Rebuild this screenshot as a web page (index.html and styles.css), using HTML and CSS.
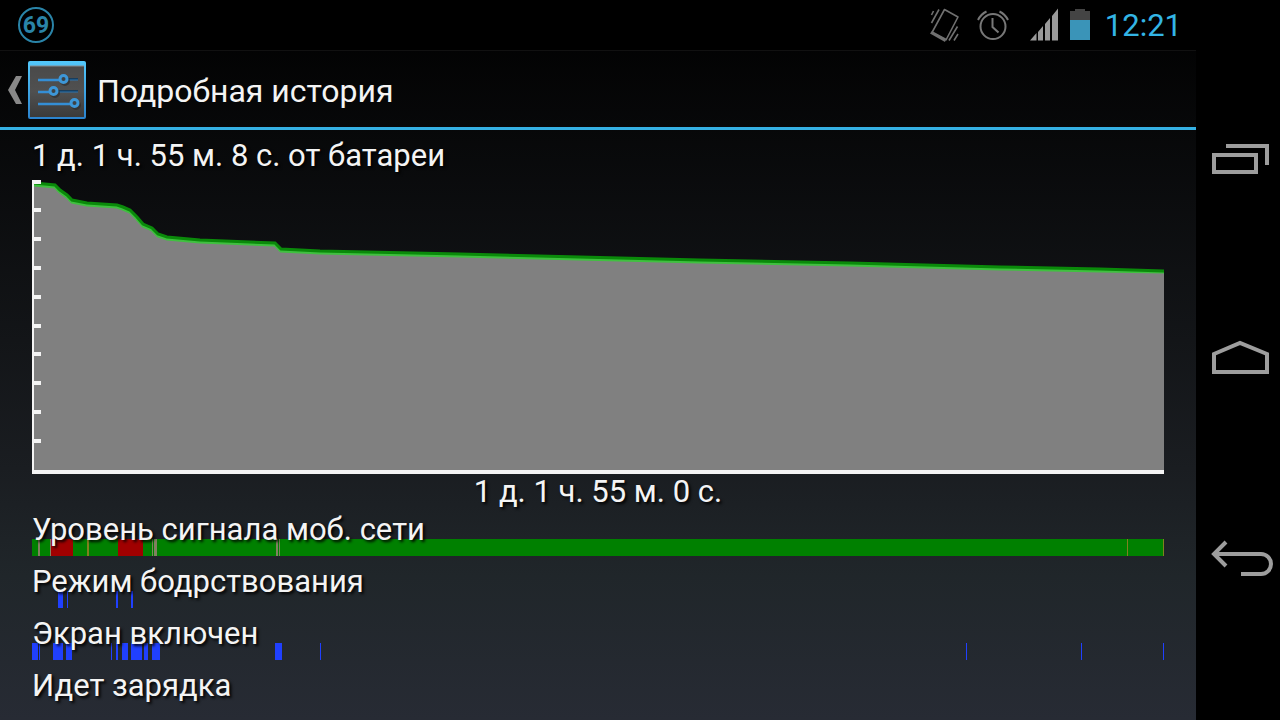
FILE: index.html
```html
<!DOCTYPE html>
<html lang="ru">
<head>
<meta charset="utf-8">
<meta name="viewport" content="width=device-width, initial-scale=1">
<title>Подробная история</title>
<link rel="stylesheet" href="styles.css">
</head>
<body>
<div class="device">
  <div class="screen">
    <div class="status">
      <span class="badge">69</span>
      <div class="status-icons">
        <svg class="icon-vibrate" width="30" height="34" viewBox="0 0 30 34" fill="none" stroke="#707070" stroke-width="1.6">
          <path d="M14.500 1.500 28 9 16 32 2 24.500Z" stroke-linejoin="round"/>
          <path d="M2 23 16 30.500 15 34 0 25.500Z" fill="#707070" stroke="none"/>
          <path d="M1.500 7 3.500 3M1.500 15 9 1.500M19 32.500 27.500 18.500M24 32.500 28 26"/>
        </svg>
        <svg class="icon-alarm" width="32" height="34" viewBox="0 0 32 34" fill="none" stroke="#777" stroke-width="2">
          <circle cx="16" cy="18.500" r="12.500"/>
          <path d="M15.500 10v9l6 5.500M1 12Q4 6 9.500 3.500M31 12Q28 6 22.500 3.500"/>
        </svg>
        <svg class="icon-signal" width="28" height="34" viewBox="0 0 28 34" fill="#999">
          <path d="M0 32.500 6.500 25v7.500ZM8 32.500V24l5-6v14.500ZM15 32.500V16l5-6v22.500ZM22 32.500V8l6-7.500v32Z"/>
        </svg>
        <svg class="icon-battery" width="20" height="34" viewBox="0 0 20 34">
          <path d="M0 3h5V1h10v2h5v9H0Z" fill="#444"/>
          <path d="M0 12h20v20H0Z" fill="#3a94b8"/>
        </svg>
        <time class="clock">12:21</time>
      </div>
    </div>
    <header class="bar">
      <button class="up" type="button" aria-label="Назад к настройкам">
        <svg class="chevron" width="14" height="28" viewBox="0 0 14 28"><path d="M8 0h6L7 14l7 14H8L0 14Z" fill="#888"/></svg>
        <svg class="app-icon" width="58" height="58" viewBox="0 0 58 58">
          <defs>
            <linearGradient id="edge" x2="0" y2="1"><stop stop-color="#53c8fb"/><stop offset="1" stop-color="#2b83ce"/></linearGradient>
            <linearGradient id="face" x2="0" y2="1"><stop stop-color="#4a4a4a"/><stop offset=".5" stop-color="#505050"/><stop offset="1" stop-color="#3b3b3b"/></linearGradient>
          </defs>
          <rect width="58" height="58" rx="2" fill="url(#edge)"/>
          <path d="M2 5h54v51H2Z" fill="url(#face)"/>
          <path d="M2 5h54" stroke="#868c90"/>
          <path d="M32 18h18M22 30h28" stroke="#193d5c" stroke-width="2"/>
          <path d="M10 19h22M10 31h13M10 43h32" stroke="#348ed5" stroke-width="2.500"/>
          <path d="M40 19h10M30 31h20" stroke="#2874b1"/>
          <g fill="none" stroke="#2b2b2b" stroke-width="2.500" opacity=".6"><circle cx="37" cy="20" r="3.800"/><circle cx="27" cy="32" r="3.800"/><circle cx="48" cy="44" r="3.800"/></g>
          <g fill="#3d4245" stroke="#3d97d8" stroke-width="3"><circle cx="35.500" cy="18" r="3.500"/><circle cx="25.500" cy="30" r="3.500"/><circle cx="46.500" cy="42" r="3.500"/></g>
        </svg>
      </button>
      <h1 class="title">Подробная история</h1>
    </header>
    <main class="content">
      <p class="total">1 д. 1 ч. 55 м. 8 с. от батареи</p>
      <svg class="chart" viewBox="0 0 1132 294" preserveAspectRatio="none" role="img" aria-label="Заряд батареи">
        <path fill="#808080" d="M2 4 23 6 28 10 35 15 40 21 55 24 85 26 91 28 98 31 105 38 111 45 120 49 126 55 135 58 168 61 243 64 249 70 288 72 428 76 668 82 818 85 968 89 1068 91 1132 92V292H2Z"/>
        <path fill="none" stroke="#40c040" stroke-width="3" d="M2 5 23 7 28 12 35 17 40 22 55 25 85 27 91 29 98 32 105 39 111 46 120 50 126 56 135 59 168 62 243 65 249 71 288 73 428 76 668 82 818 85 968 89 1068 91 1132 92"/>
        <path fill="none" stroke="#0a8a0a" stroke-width="3" d="M2 3 23 5 28 10 35 15 40 20 55 23 85 25 91 27 98 30 105 37 111 44 120 48 126 54 135 57 168 60 243 63 249 69 288 71 428 74 668 80 818 83 968 87 1068 89 1132 91"/>
        <path fill="none" stroke="#f4f4f4" stroke-width="4" d="M0 2h9M0 30h9M0 59h9M0 88h9M0 117h9M0 146h9M0 174h9M0 203h9M0 232h9M0 261h9M0 292H1132"/>
        <path fill="#f4f4f4" d="M0 0h2v294H0Z"/>
      </svg>
      <p class="span">1 д. 1 ч. 55 м. 0 с.</p>
      <ul class="rows">
        <li class="row">
          <svg class="track" viewBox="0 0 1132 17" preserveAspectRatio="none" shape-rendering="crispEdges">
            <path fill="#008000" d="M0 0h1132v17H0Z"/>
            <path fill="#a00000" d="M19 0h22v17h-22ZM86 0h25v17H86Z"/>
            <path fill="#808060" d="M6 0h2v17H6ZM18 0h1v17h-1ZM120 0h1v17h-1ZM122 0h3v17h-3ZM244 0h2v17h-2ZM247 0h1v17h-1Z"/>
            <path fill="#808020" d="M55 0h2v17h-2ZM1095 0h1v17h-1ZM1131 0h1v17h-1Z"/>
          </svg>
          <span class="label">Уровень сигнала моб. сети</span>
        </li>
        <li class="row">
          <svg class="track" viewBox="0 0 1132 17" preserveAspectRatio="none" shape-rendering="crispEdges">
            <path fill="#2040ff" d="M26 0h5v17h-5ZM35 0h1v17h-1ZM84 0h2v17h-2ZM99 0h2v17h-2Z"/>
          </svg>
          <span class="label">Режим бодрствования</span>
        </li>
        <li class="row">
          <svg class="track" viewBox="0 0 1132 17" preserveAspectRatio="none" shape-rendering="crispEdges">
            <path fill="#2040ff" d="M0 0h6v17H0ZM7 0h1v17H7ZM21 0h10v17H21ZM34 0h6v17h-6ZM79 0h1v17h-1ZM84 0h2v17h-2ZM90 0h6v17h-6ZM99 0h11v17H99ZM112 0h4v17h-4ZM120 0h8v17h-8ZM243 0h7v17h-7ZM288 0h1v17h-1ZM934 0h1v17h-1ZM1049 0h1v17h-1ZM1131 0h1v17h-1Z"/>
          </svg>
          <span class="label">Экран включен</span>
        </li>
        <li class="row"><span class="label">Идет зарядка</span></li>
      </ul>
    </main>
  </div>
  <nav class="nav">
    <button class="key" type="button" aria-label="Недавние">
      <svg width="64" height="40" viewBox="0 0 64 40" fill="none" stroke="#9d9d9d" stroke-width="4"><path d="M6 15h42v17H6ZM18 6h41v19"/></svg>
    </button>
    <button class="key" type="button" aria-label="Домой">
      <svg width="64" height="40" viewBox="0 0 64 40" fill="none" stroke="#9d9d9d" stroke-width="4"><path d="M6 32V14L32 3 59 14V32Z"/></svg>
    </button>
    <button class="key" type="button" aria-label="Назад">
      <svg width="66" height="40" viewBox="-1 0 66 40" fill="none" stroke="#9d9d9d" stroke-width="4"><path d="M7 14H53a9.500 9.500 0 0 1 0 20H33"/><path d="M18 2 6 14 18 26"/></svg>
    </button>
  </nav>
</div>
</body>
</html>
```

FILE: styles.css
```css
* { box-sizing: border-box; }

body {
  margin: 0;
  background: #000;
  color: #f4f4f4;
  font-family: Roboto, "Noto Sans", sans-serif;
  font-size: 31px;
}

h1, p, ul { margin: 0; padding: 0; font-weight: 400; }
svg { display: block; }

button {
  border: 0;
  padding: 0;
  background: none;
  cursor: pointer;
}

.device { display: flex; min-height: 100vh; }

.screen {
  flex: 1;
  min-width: 0;
  display: flex;
  flex-direction: column;
  background: linear-gradient(#000, #1a1d21 65%, #20262a 80%, #272b34);
}

.status {
  display: flex;
  align-items: center;
  justify-content: space-between;
  height: 50px;
  padding: 0 14px 0 18px;
  background: #000;
}

.badge {
  width: 36px;
  height: 36px;
  border: 2px solid #2a84a8;
  border-radius: 50%;
  color: #2a84a8;
  font-size: 23px;
  font-weight: 700;
  line-height: 34px;
  text-align: center;
}

.status-icons { display: flex; align-items: center; }
.icon-vibrate { margin-right: 17px; }
.icon-alarm { margin-right: 21px; }
.icon-signal { margin-right: 12px; }
.icon-battery { margin-right: 15px; }

.clock { padding-top: 2px; color: #33b5e5; line-height: 48px; }

.bar {
  display: flex;
  align-items: center;
  gap: 11px;
  height: 80px;
  padding: 1px 0 0 8px;
  border-top: 1px solid #111;
  border-bottom: 3px solid #35b1e4;
}

.up { display: flex; align-items: center; gap: 6px; }

.title { padding-top: 3px; font-size: 32px; }

.content { padding: 0 32px; }

.total, .label, .span { text-shadow: 2px 2px 3px #000; }

.total { padding-top: 2px; line-height: 48px; }

.chart { width: 100%; height: 294px; }

.span { padding-top: 2px; line-height: 32px; text-align: center; }

.rows {
  display: grid;
  gap: 4px;
  list-style: none;
}

.row { display: grid; height: 48px; }
.track, .label { grid-area: 1 / 1; }
.track { align-self: end; width: 100%; height: 17px; }
.label { z-index: 1; line-height: 44px; }

.nav {
  display: flex;
  flex-direction: column;
  align-items: center;
  gap: 160px;
  width: 84px;
  padding: 140px 0 0 4px;
}

.key { height: 40px; }
```
